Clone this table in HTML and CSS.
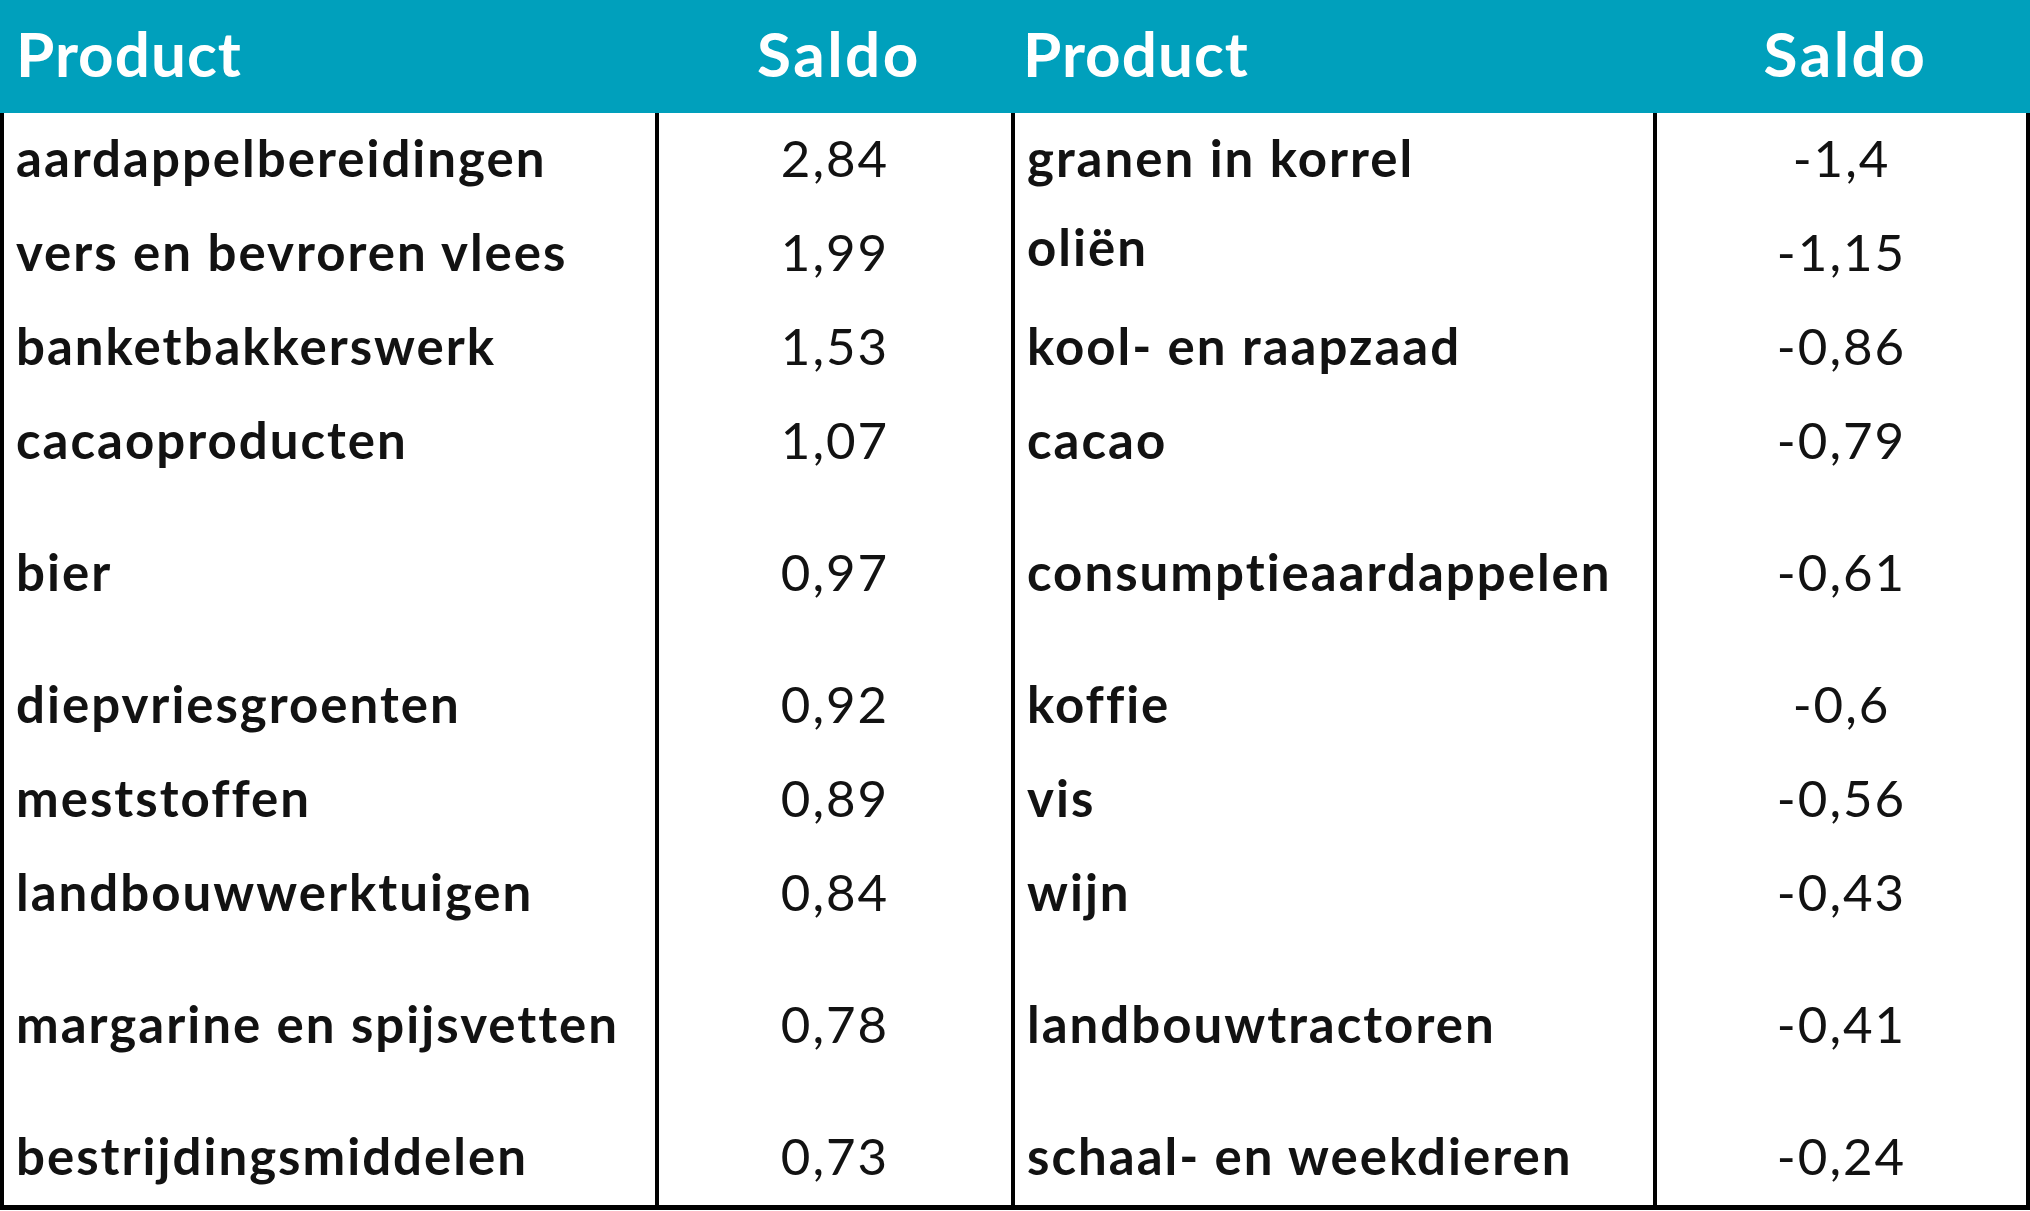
FILE: index.html
```html
<!DOCTYPE html>
<html lang="nl">
<head>
<meta charset="utf-8">
<title>Product saldo</title>
<link rel="stylesheet" href="styles.css">
</head>
<body>
<div class="sheet">
  <div class="row head">
    <div class="cell name">Product</div>
    <div class="cell num">Saldo</div>
    <div class="cell name">Product</div>
    <div class="cell num">Saldo</div>
  </div>
  <div class="body">
    <div class="row">
      <div class="cell name">aardappelbereidingen</div>
      <div class="cell num div">2,84</div>
      <div class="cell name div">granen in korrel</div>
      <div class="cell num div">-1,4</div>
    </div>
    <div class="row">
      <div class="cell name">vers en bevroren vlees</div>
      <div class="cell num div">1,99</div>
      <div class="cell name div raised">oliën</div>
      <div class="cell num div">-1,15</div>
    </div>
    <div class="row">
      <div class="cell name">banketbakkerswerk</div>
      <div class="cell num div">1,53</div>
      <div class="cell name div">kool- en raapzaad</div>
      <div class="cell num div">-0,86</div>
    </div>
    <div class="row">
      <div class="cell name">cacaoproducten</div>
      <div class="cell num div">1,07</div>
      <div class="cell name div">cacao</div>
      <div class="cell num div">-0,79</div>
    </div>
    <div class="row tall">
      <div class="cell name">bier</div>
      <div class="cell num div">0,97</div>
      <div class="cell name div">consumptieaardappelen</div>
      <div class="cell num div">-0,61</div>
    </div>
    <div class="row tall">
      <div class="cell name">diepvriesgroenten</div>
      <div class="cell num div">0,92</div>
      <div class="cell name div">koffie</div>
      <div class="cell num div">-0,6</div>
    </div>
    <div class="row">
      <div class="cell name">meststoffen</div>
      <div class="cell num div">0,89</div>
      <div class="cell name div">vis</div>
      <div class="cell num div">-0,56</div>
    </div>
    <div class="row">
      <div class="cell name">landbouwwerktuigen</div>
      <div class="cell num div">0,84</div>
      <div class="cell name div">wijn</div>
      <div class="cell num div">-0,43</div>
    </div>
    <div class="row tall">
      <div class="cell name">margarine en spijsvetten</div>
      <div class="cell num div">0,78</div>
      <div class="cell name div">landbouwtractoren</div>
      <div class="cell num div">-0,41</div>
    </div>
    <div class="row tall">
      <div class="cell name">bestrijdingsmiddelen</div>
      <div class="cell num div">0,73</div>
      <div class="cell name div">schaal- en weekdieren</div>
      <div class="cell num div">-0,24</div>
    </div>
  </div>
</div>
</body>
</html>
```

FILE: styles.css
```css
html, body {
  margin: 0;
  padding: 0;
  background: #ffffff;
}

.sheet {
  width: 2030px;
  font-family: Lato, "Noto Sans", "Liberation Sans", sans-serif;
  color: #121212;
}

.row {
  display: grid;
  grid-template-columns: 651px 356px 642px 373px;
}

.head {
  background: #00a0bc;
  color: #ffffff;
  height: 113px;
  padding-left: 4px;
}

.body {
  border-left: 4px solid #000;
  border-right: 4px solid #000;
  border-bottom: 5px solid #000;
  width: 2022px;
}

.cell {
  font-size: 51px;
  line-height: 90px;
  padding-bottom: 4px;
  letter-spacing: 2px;
  white-space: nowrap;
}

.name {
  font-weight: 700;
  padding-left: 12px;
}

.num {
  font-weight: 400;
  text-align: center;
}

.head .cell {
  font-size: 62px;
  font-weight: 700;
  line-height: 106px;
  letter-spacing: 1px;
  padding-bottom: 7px;
}

.head .num {
  padding-left: 12px;
  letter-spacing: 2.5px;
}

.div {
  border-left: 4px solid #000;
}

.tall .cell {
  padding-top: 38px;
}

.body .raised {
  line-height: 80px;
  padding-bottom: 14px;
}
```
